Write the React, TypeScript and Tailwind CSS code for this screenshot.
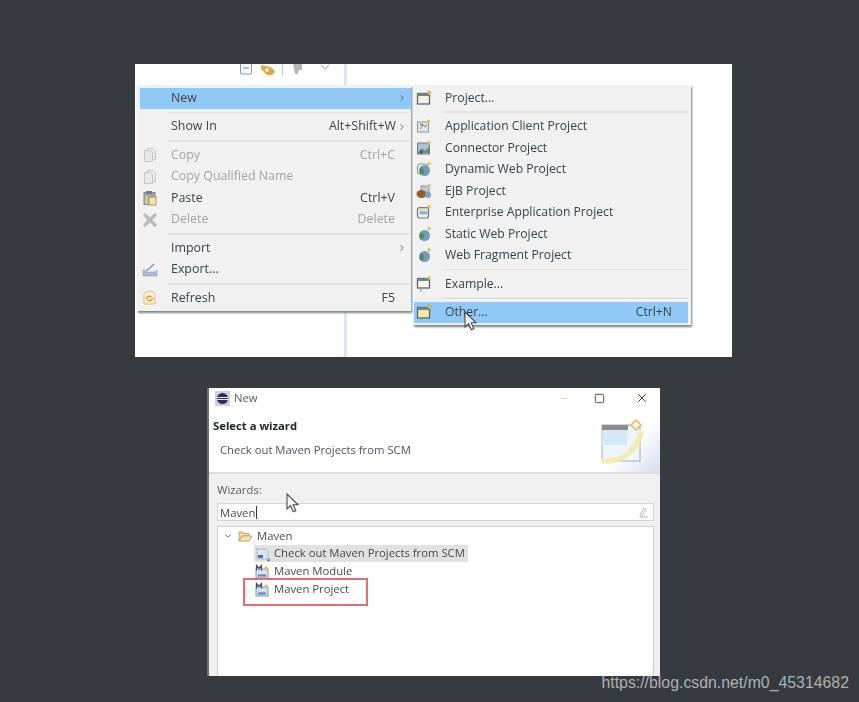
import type { ReactNode } from "react";
import { ChevronRight, ChevronDown, Minus, Square, X } from "lucide-react";

function WizardIcon({ tone = "#f4f1d8" }: { tone?: string }) {
  return (
    <svg width="16" height="16" viewBox="0 0 16 16" aria-hidden="true">
      <rect x="1.5" y="3.5" width="12" height="10.5" fill={tone} stroke="#4f6a7c" strokeWidth="1.3" />
      <rect x="1.5" y="3.5" width="12" height="2.5" fill="#6f8798" />
      <path d="M13 0.5l2 2.2 -2 2.2 -2-2.2z" fill="#e8c04a" stroke="#c79a2c" strokeWidth="0.6" />
    </svg>
  );
}

function ExampleIcon() {
  return (
    <svg width="16" height="18" viewBox="0 0 16 18" aria-hidden="true">
      <rect x="1.5" y="3.5" width="12" height="9.5" fill="#fbf7e6" stroke="#4f6a7c" strokeWidth="1.3" />
      <rect x="1.5" y="3.5" width="12" height="2.5" fill="#6f8798" />
      <path d="M13 0.5l2 2.2 -2 2.2 -2-2.2z" fill="#e8c04a" />
      <path d="M5 13v4" stroke="#9a8a70" />
    </svg>
  );
}

function AppClientIcon() {
  return (
    <svg width="16" height="16" viewBox="0 0 16 16" aria-hidden="true">
      <rect x="1.5" y="4" width="11" height="10" fill="#d8e8ef" stroke="#7f9aaa" />
      <path d="M4 11l3-4 2 2 2-3" stroke="#c96a50" fill="none" />
      <path d="M4 6.5h3" stroke="#5d9a5a" strokeWidth="1.4" />
      <path d="M12.5 1l2 2.2 -2 2.2 -2-2.2z" fill="#e8c04a" />
    </svg>
  );
}

function ConnectorIcon() {
  return (
    <svg width="16" height="16" viewBox="0 0 16 16" aria-hidden="true">
      <rect x="1.5" y="3" width="12" height="11" fill="#a9c2d2" stroke="#667f90" />
      <path d="M2 13l4-5 3 3 4-4v6H2z" fill="#6f8a72" />
      <circle cx="5" cy="12" r="2" fill="#4d6d4a" />
      <path d="M13 0.5l2 2.2 -2 2.2 -2-2.2z" fill="#e8c04a" />
    </svg>
  );
}

function GlobeIcon({ left = false }: { left?: boolean }) {
  return (
    <svg width="16" height="16" viewBox="0 0 16 16" aria-hidden="true">
      {left && <rect x="1.5" y="3" width="10" height="10" rx="2" fill="#e4eef4" stroke="#7a97a8" />}
      <circle cx="8.5" cy="9.5" r="5.5" fill="#6d9fc0" />
      <path d="M5 6c2 1 4 3 3 6l-3 2c-2-2-2-5 0-8z" fill="#64855a" />
      <path d="M13 0.5l2 2.2 -2 2.2 -2-2.2z" fill="#e8c04a" />
    </svg>
  );
}

function BeanIcon() {
  return (
    <svg width="16" height="16" viewBox="0 0 16 16" aria-hidden="true">
      <rect x="5" y="3" width="8" height="9" fill="#b6cede" stroke="#7a97a8" />
      <ellipse cx="5.5" cy="11" rx="5" ry="4" fill="#9a5a2c" />
      <circle cx="12" cy="12" r="3" fill="#7ba6c4" />
      <path d="M13 0.5l2 2.2 -2 2.2 -2-2.2z" fill="#e8c04a" />
    </svg>
  );
}

function EnterpriseIcon() {
  return (
    <svg width="16" height="16" viewBox="0 0 16 16" aria-hidden="true">
      <rect x="1.5" y="3.5" width="11" height="10.5" rx="2" fill="#f3f6f8" stroke="#5f7f94" strokeWidth="1.2" />
      <rect x="3.5" y="7" width="8" height="3.5" fill="#8fb8d4" />
      <path d="M2 5h10" stroke="#c5a860" />
      <path d="M13 0.5l2 2.2 -2 2.2 -2-2.2z" fill="#e8c04a" />
    </svg>
  );
}

function PageIcon() {
  return (
    <svg width="16" height="16" viewBox="0 0 16 16" aria-hidden="true">
      <path d="M5.5 1.5h6l2 2v9h-8z" fill="#ececec" stroke="#c6c6c6" />
      <path d="M2.5 3.5h6l2 2v9h-8z" fill="#e9e9e9" stroke="#c4c4c4" />
    </svg>
  );
}

function PasteIcon() {
  return (
    <svg width="16" height="16" viewBox="0 0 16 16" aria-hidden="true">
      <rect x="2" y="2.5" width="11" height="12" fill="#9aa7ae" stroke="#7d8a92" />
      <rect x="4" y="1" width="6" height="3" fill="#6f7c84" />
      <rect x="7" y="7" width="7" height="8" fill="#f2e2a8" stroke="#a89a60" />
      <rect x="3" y="6" width="3" height="8" fill="#e6c468" />
    </svg>
  );
}

function DeleteIcon() {
  return (
    <svg width="16" height="16" viewBox="0 0 16 16" aria-hidden="true">
      <path d="M3 3l10 10M13 3L3 13" stroke="#b9bcbe" strokeWidth="3.4" strokeLinecap="round" />
    </svg>
  );
}

function ExportIcon() {
  return (
    <svg width="16" height="16" viewBox="0 0 16 16" aria-hidden="true">
      <path d="M1 8l2 0 0 2 11 0 1-2v6H1z" fill="#a9bdd6" stroke="#8fa4bf" strokeWidth="0.6" />
      <path d="M4 9l5-4 3-3" stroke="#8298b4" strokeWidth="1.4" fill="none" />
    </svg>
  );
}

function RefreshIcon() {
  return (
    <svg width="16" height="16" viewBox="0 0 16 16" aria-hidden="true">
      <path d="M2 3l6-2 5 2v11H2z" fill="#fbf2d6" stroke="#d6c48c" />
      <path d="M4.5 9a3 3 0 0 1 5-2M10.5 8a3 3 0 0 1-5 2" stroke="#d88f2e" strokeWidth="1.3" fill="none" />
    </svg>
  );
}

function Cursor() {
  return (
    <svg width="14" height="20" viewBox="0 0 14 20" aria-hidden="true">
      <path d="M1 1v15l3.6-3.3 2.6 6 2.6-1.1-2.6-5.8H12z" fill="#f4f4f4" stroke="#4b4b4b" strokeWidth="1.1" />
    </svg>
  );
}

function MavenIcon() {
  return (
    <svg width="15" height="15" viewBox="0 0 15 15" aria-hidden="true">
      <rect x="1" y="5" width="12" height="9" fill="#d4e2ee" stroke="#7f9cba" />
      <rect x="3" y="10.5" width="8" height="2" fill="#5b80b8" />
      <path d="M1.5 6.5v-5l2.5 3 2.5-3v5" stroke="#3f4f6c" strokeWidth="1.2" fill="none" />
      <path d="M11 2l2 2-2 2-2-2z" fill="#e8c04a" />
    </svg>
  );
}

function CheckoutIcon() {
  return (
    <svg width="16" height="16" viewBox="0 0 16 16" aria-hidden="true">
      <path d="M2 3h9l2 2v8H2z" fill="#d7e5f0" stroke="#88a4bc" strokeDasharray="2 1" />
      <rect x="3" y="9" width="5" height="3" fill="#4d6f92" />
      <path d="M14 12l1 3-3 0z" fill="#4d6f92" />
    </svg>
  );
}

function MenuRow({
  icon,
  label,
  shortcut,
  arrow,
  muted,
  active,
  padEnd = "pr-[16px]",
}: {
  icon?: ReactNode;
  label: string;
  shortcut?: string;
  arrow?: boolean;
  muted?: boolean;
  active?: boolean;
  padEnd?: string;
}) {
  return (
    <div
      className={`flex h-[21.5px] items-center ${active ? "bg-[#90c8f6]" : ""} ${muted ? "text-[#a3a3a3]" : "text-[#38434a]"}`}
    >
      <span className="flex w-[31px] shrink-0 items-center justify-start pl-[2px]">{icon}</span>
      <span className="flex-1 whitespace-nowrap">{label}</span>
      {shortcut && <span className={`whitespace-nowrap ${padEnd}`}>{shortcut}</span>}
      {arrow && <ChevronRight size={10} strokeWidth={2} className="mr-[4px] text-[#4a5459]" />}
    </div>
  );
}

function Sep() {
  return (
    <div className="flex h-[7px] items-center">
      <div className="ml-[28px] h-[1.5px] flex-1 bg-[#e2e2e2]" />
    </div>
  );
}

export default function App() {
  return (
    <div className="h-[702px] w-[859px] overflow-hidden bg-[#363b3f] pt-[64px] font-['Open_Sans',sans-serif]">
      <div className="relative ml-[135px] h-[293px] w-[597px] overflow-hidden bg-white blur-[0.5px]">
        <div className="absolute top-0 bottom-0 left-[209px] w-[2.5px] bg-[#dfe4f2]" />

        <div className="flex h-[21px] w-[209px] items-start justify-end pr-[9px]">
          <svg width="95" height="13" viewBox="0 0 95 13" aria-hidden="true">
            <rect x="0.5" y="-2" width="11" height="12" rx="1" fill="#f4f8fb" stroke="#7b9fb8" />
            <path d="M3 4h6" stroke="#6a8ba3" />
            <path d="M21 1l5 1 4 1 3 2 2 3-3 3-5 0-3-3-3-3z" fill="#dca94a" />
            <circle cx="27" cy="6" r="2" fill="#f5e7b8" />
            <path d="M42.5 0v11" stroke="#c2c6c8" />
            <path d="M53 0h9v6h-3l-1 4h-3z" fill="#b5b8ba" />
            <path d="M81 1l4 4 4-4" stroke="#b9bcbe" fill="none" strokeWidth="1.2" />
          </svg>
        </div>

        <div className="absolute top-[21px] left-[2px] flex items-start">
          <div className="w-[274px] bg-[#f1f1f1] pt-[2.5px] pb-[2px] pl-[3px] text-[12.4px] font-medium shadow-[1px_2px_2px_#7f8385]">
            <MenuRow label="New" arrow active />
            <Sep />
            <MenuRow label="Show In" shortcut="Alt+Shift+W" padEnd="pr-[1px]" arrow />
            <Sep />
            <MenuRow icon={<PageIcon />} label="Copy" shortcut="Ctrl+C" muted />
            <MenuRow icon={<PageIcon />} label="Copy Qualified Name" muted />
            <MenuRow icon={<PasteIcon />} label="Paste" shortcut="Ctrl+V" />
            <MenuRow icon={<DeleteIcon />} label="Delete" shortcut="Delete" muted />
            <Sep />
            <MenuRow label="Import" arrow />
            <MenuRow icon={<ExportIcon />} label="Export..." />
            <Sep />
            <MenuRow icon={<RefreshIcon />} label="Refresh" shortcut="F5" />
          </div>

          <div className="relative ml-[2px] w-[278px] bg-[#f1f1f1] py-[2px] pr-[3px] pl-[1px] text-[12.2px] font-medium shadow-[1px_2px_2px_#7f8385]">
            <MenuRow icon={<WizardIcon />} label="Project..." />
            <Sep />
            <MenuRow icon={<AppClientIcon />} label="Application Client Project" />
            <MenuRow icon={<ConnectorIcon />} label="Connector Project" />
            <MenuRow icon={<GlobeIcon left />} label="Dynamic Web Project" />
            <MenuRow icon={<BeanIcon />} label="EJB Project" />
            <MenuRow icon={<EnterpriseIcon />} label="Enterprise Application Project" />
            <MenuRow icon={<GlobeIcon />} label="Static Web Project" />
            <MenuRow icon={<GlobeIcon />} label="Web Fragment Project" />
            <Sep />
            <MenuRow icon={<ExampleIcon />} label="Example..." />
            <Sep />
            <MenuRow icon={<WizardIcon tone="#f6e9a8" />} label="Other..." shortcut="Ctrl+N" active />
            <div className="absolute top-[226px] left-[51px]">
              <Cursor />
            </div>
          </div>
        </div>
      </div>

      <div className="relative mt-[31px] ml-[207px] flex h-[288px] w-[453px] flex-col overflow-hidden border-l-2 border-[#6b6f72] bg-white text-[11.3px] font-medium text-[#454b50] blur-[0.5px]">
        <div className="flex h-[20px] shrink-0 items-center pl-[6px]">
          <svg width="15" height="15" viewBox="0 0 15 15" aria-hidden="true">
            <rect width="15" height="15" fill="#cfcde0" />
            <circle cx="7.5" cy="7.5" r="5.5" fill="#2f2d55" />
            <path d="M2 6.5h11M2 8.5h11" stroke="#e8e8f0" />
          </svg>
          <span className="ml-[4px] flex-1 text-[#555b60]">New</span>
          <Minus size={9} className="mr-[26px] text-[#c8c8c8]" />
          <Square size={11} strokeWidth={2} className="mr-[30px] text-[#444]" />
          <X size={14} strokeWidth={1.7} className="mr-[11px] text-[#333]" />
        </div>

        <div className="flex h-[64px] shrink-0">
          <div className="flex-1 pl-[4px]">
            <div className="mt-[10px] font-bold text-[#20262a]">Select a wizard</div>
            <div className="mt-[7px] pl-[7px] whitespace-nowrap text-[#4c5358]">Check out Maven Projects from SCM</div>
          </div>
          <div className="relative h-[64px] w-[64px] bg-gradient-to-br from-white from-55% to-[#d5def0]">
            <svg width="50" height="50" viewBox="0 0 50 50" className="absolute top-[7px] left-[4px]" aria-hidden="true">
              <rect x="2" y="10" width="38" height="36" fill="#eef5f8" stroke="#a7aeb0" />
              <rect x="2" y="10" width="25" height="20" fill="#d5e8f3" />
              <rect x="2" y="10" width="26" height="5" fill="#8d8d8d" />
              <path d="M2 46c20 2 34-10 40-30" stroke="#f6eab0" strokeWidth="5" fill="none" />
              <path d="M36 5l5 5-5 5-5-5z" fill="#fff8dc" stroke="#d9b868" strokeWidth="1.5" />
            </svg>
          </div>
        </div>

        <div className="flex min-h-0 flex-1 flex-col border-t-2 border-[#dcdcdc] bg-[#f0f0f0] pr-[6px] pl-[8px]">
          <div className="flex h-[29px] shrink-0 items-end pb-[4px] text-[#555b60]">Wizards:</div>
          <div className="flex h-[18px] shrink-0 items-center justify-between border border-[#d5d5d5] bg-white pr-[4px] pl-[2px]">
            <span className="border-r border-[#333] pr-[0.5px] leading-[13px]">Maven</span>
            <svg width="12" height="12" viewBox="0 0 12 12" aria-hidden="true">
              <path d="M3 9l4-7 2 1-4 7zM2 11h9" stroke="#bbbbbb" fill="none" />
            </svg>
          </div>
          <div className="mt-[5px] min-h-0 flex-1 border border-b-0 border-[#cfcfcf] bg-white pl-[5px]">
            <div className="flex h-[18px] items-center">
              <ChevronDown size={10} strokeWidth={2.2} className="text-[#555]" />
              <svg width="15" height="12" viewBox="0 0 15 12" className="mr-[4px] ml-[5px]" aria-hidden="true">
                <path d="M1 2h4l1 1.5h5V6H4L1 11z" fill="#f1d9a0" stroke="#c8a562" />
                <path d="M1 11l3-5h10l-3 5z" fill="#f6e5b8" stroke="#c8a562" />
              </svg>
              <span>Maven</span>
            </div>
            <div className="ml-[31px] flex h-[17px] w-[214px] items-center bg-[#e1e1e1] pl-[1px]">
              <CheckoutIcon />
              <span className="ml-[3px] whitespace-nowrap">Check out Maven Projects from SCM</span>
            </div>
            <div className="ml-[31px] flex h-[18px] items-center gap-[4px] pl-[1px]">
              <MavenIcon />
              <span>Maven Module</span>
            </div>
            <div className="ml-[31px] flex h-[18px] items-center gap-[4px] pl-[1px]">
              <MavenIcon />
              <span>Maven Project</span>
            </div>
          </div>
        </div>

        <div className="absolute top-[190px] left-[34px] h-[28px] w-[125px] border-2 border-[#e86a72]" />
        <div className="absolute top-[105px] left-[77px]">
          <Cursor />
        </div>
      </div>

      <div className="flex h-[14px] items-center justify-end pr-[10px] font-['Liberation_Sans',sans-serif] text-[15.85px] leading-none text-[#aeb1b3]">
        https://blog.csdn.net/m0_45314682
      </div>
    </div>
  );
}
